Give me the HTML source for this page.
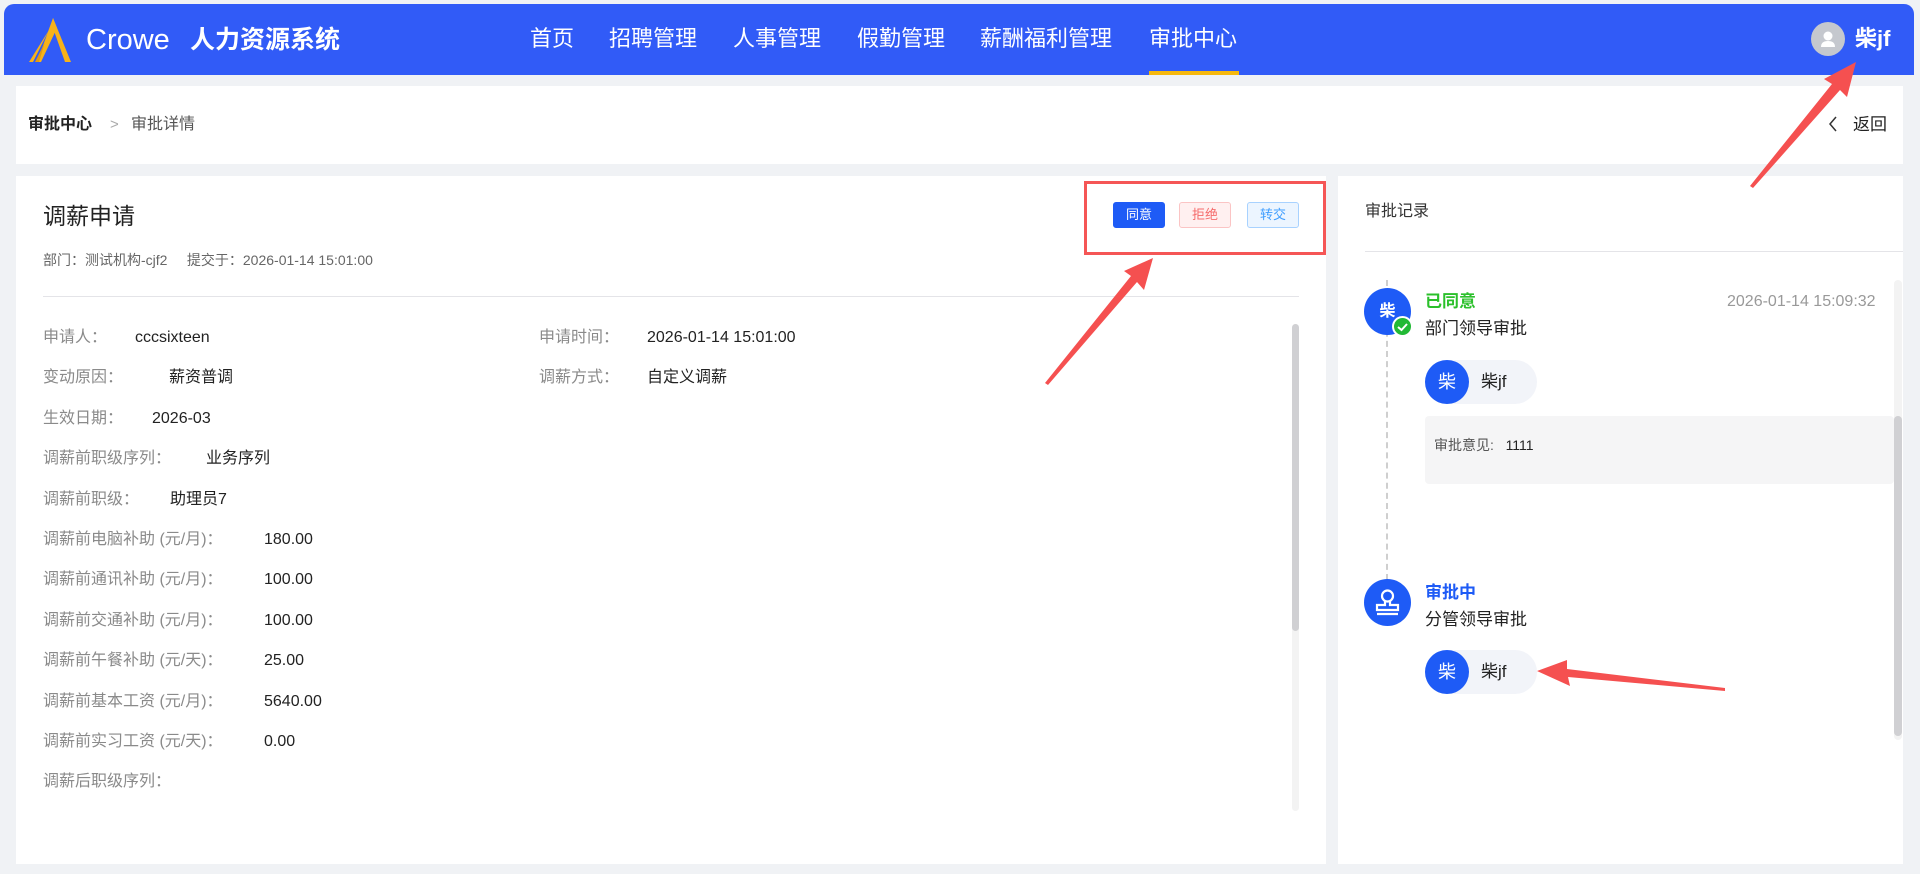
<!DOCTYPE html>
<html><head><meta charset="utf-8"><style>
*{margin:0;padding:0;box-sizing:border-box}
body{width:1920px;height:874px;overflow:hidden;background:#f0f2f5;font-family:"Liberation Sans","Noto Sans CJK SC",sans-serif;position:relative;color:#333}
.abs{position:absolute;white-space:nowrap}
#hdr{position:absolute;left:4px;top:4px;width:1910px;height:71px;background:#315bf7;border-radius:10px 10px 0 0}
.nav{position:absolute;top:24px;color:#fff;font-size:22px;line-height:30px}
.card{position:absolute;background:#fff}
.lbl{position:absolute;left:43px;font-size:16px;color:#8a8a8a;line-height:20px;white-space:nowrap}
.val{position:absolute;font-size:16px;color:#222;line-height:20px;white-space:nowrap}
.btn{position:absolute;top:202px;height:26px;width:52px;font-size:13px;line-height:24px;text-align:center;border-radius:3px;border:1px solid}
.chip{position:absolute;left:1425px;width:112px;height:44px;background:#f2f4f9;border-radius:22px}
.chip .c{position:absolute;left:0;top:0;width:44px;height:44px;border-radius:50%;background:#1e5bf6;color:#fff;font-size:18px;line-height:44px;text-align:center}
.chip .t{position:absolute;left:56px;top:11px;font-size:17px;line-height:22px;color:#222}
</style></head><body>
<div id="hdr"></div>
<svg class="abs" style="left:27px;top:16px" width="48" height="48" viewBox="0 0 48 48">
<path d="M26 2 L44 46 L38 46 L26 12 Z" fill="#f7b21a"/>
<path d="M26 2 L30 12 L14 46 L10 46 Z" fill="#f7b21a"/>
<path d="M22 14 L6 46 L2 46 Z" fill="#f7b21a"/>
<path d="M18 26 L12 46 L8 46 Z" fill="#e39b10"/>
</svg>
<div class="abs" style="left:86px;top:22px;color:#fff;font-size:29px;line-height:36px">Crowe</div>
<div class="abs" style="left:190px;top:23px;color:#fff;font-size:25px;font-weight:bold;line-height:34px">人力资源系统</div>
<div class="nav" style="left:530px">首页</div>
<div class="nav" style="left:609px">招聘管理</div>
<div class="nav" style="left:733px">人事管理</div>
<div class="nav" style="left:857px">假勤管理</div>
<div class="nav" style="left:980px">薪酬福利管理</div>
<div class="nav" style="left:1149px">审批中心</div>
<div class="abs" style="left:1149px;top:71px;width:90px;height:4px;background:#f6b80d"></div>
<div class="abs" style="left:1811px;top:22px;width:34px;height:34px;border-radius:50%;background:#c5c8ce"></div>
<svg class="abs" style="left:1811px;top:22px" width="34" height="34"><circle cx="17" cy="14" r="4.5" fill="#fff"/><path d="M10 25 Q10 19 17 19 Q24 19 24 25 Z" fill="#fff"/></svg>
<div class="abs" style="left:1855px;top:24px;color:#fff;font-size:22px;font-weight:bold;line-height:30px">柴jf</div>

<div class="card" style="left:16px;top:86px;width:1887px;height:78px"></div>
<div class="abs" style="left:28px;top:115px;font-size:16px;font-weight:bold;color:#222;line-height:20px">审批中心</div>
<div class="abs" style="left:110px;top:115px;font-size:15px;color:#aaa;line-height:20px">&gt;</div>
<div class="abs" style="left:131px;top:115px;font-size:16px;color:#555;line-height:20px">审批详情</div>
<svg class="abs" style="left:1827px;top:116px" width="12" height="16"><path d="M9 1 L3 8 L9 15" stroke="#333" stroke-width="1.5" fill="none"/></svg>
<div class="abs" style="left:1853px;top:115px;font-size:17px;color:#222;line-height:20px">返回</div>

<div class="card" style="left:16px;top:176px;width:1310px;height:688px"></div>
<div class="card" style="left:1338px;top:176px;width:565px;height:688px"></div>

<div class="abs" style="left:43px;top:202px;font-size:23px;color:#222;line-height:28px">调薪申请</div>
<div class="abs" style="left:43px;top:251px;font-size:14px;color:#666;line-height:18px">部门：测试机构-cjf2&nbsp;&nbsp;&nbsp;&nbsp;&nbsp;提交于：2026-01-14 15:01:00</div>
<div class="abs" style="left:43px;top:296px;width:1256px;height:1px;background:#e4e4e8"></div>
<div class="abs" style="left:1084px;top:181px;width:242px;height:74px;border:3px solid #f55656"></div>
<div class="btn" style="left:1113px;background:#1e5bf6;border-color:#1e5bf6;color:#fff">同意</div>
<div class="btn" style="left:1179px;background:#fff0f0;border-color:#fbc4c4;color:#f56c6c">拒绝</div>
<div class="btn" style="left:1247px;background:#ecf5ff;border-color:#a8d2ff;color:#409eff">转交</div>

<div class="lbl" style="top:328px">申请人：</div><div class="val" style="left:135px;top:328px">cccsixteen</div>
<div class="lbl" style="left:539px;top:328px">申请时间：</div><div class="val" style="left:647px;top:328px">2026-01-14 15:01:00</div>
<div class="lbl" style="top:368px">变动原因：</div><div class="val" style="left:169px;top:368px">薪资普调</div>
<div class="lbl" style="left:539px;top:368px">调薪方式：</div><div class="val" style="left:647px;top:368px">自定义调薪</div>
<div class="lbl" style="top:409px">生效日期：</div><div class="val" style="left:152px;top:409px">2026-03</div>
<div class="lbl" style="top:449px">调薪前职级序列：</div><div class="val" style="left:206px;top:449px">业务序列</div>
<div class="lbl" style="top:490px">调薪前职级：</div><div class="val" style="left:170px;top:490px">助理员7</div>
<div class="lbl" style="top:530px">调薪前电脑补助 (元/月)：</div><div class="val" style="left:264px;top:530px">180.00</div>
<div class="lbl" style="top:570px">调薪前通讯补助 (元/月)：</div><div class="val" style="left:264px;top:570px">100.00</div>
<div class="lbl" style="top:611px">调薪前交通补助 (元/月)：</div><div class="val" style="left:264px;top:611px">100.00</div>
<div class="lbl" style="top:651px">调薪前午餐补助 (元/天)：</div><div class="val" style="left:264px;top:651px">25.00</div>
<div class="lbl" style="top:692px">调薪前基本工资 (元/月)：</div><div class="val" style="left:264px;top:692px">5640.00</div>
<div class="lbl" style="top:732px">调薪前实习工资 (元/天)：</div><div class="val" style="left:264px;top:732px">0.00</div>
<div class="lbl" style="top:772px">调薪后职级序列：</div>
<div class="abs" style="left:1292px;top:324px;width:7px;height:487px;background:#f3f3f3;border-radius:4px"></div>
<div class="abs" style="left:1292px;top:324px;width:7px;height:307px;background:#d0d0d3;border-radius:4px"></div>

<div class="abs" style="left:1365px;top:202px;font-size:16px;color:#333;line-height:20px">审批记录</div>
<div class="abs" style="left:1365px;top:251px;width:538px;height:1px;background:#e4e4e8"></div>
<div class="abs" style="left:1894px;top:280px;width:8px;height:460px;background:#f3f3f3;border-radius:4px"></div>
<div class="abs" style="left:1894px;top:416px;width:8px;height:320px;background:#d0d0d3;border-radius:4px"></div>
<div class="abs" style="left:1386px;top:280px;width:0;height:300px;border-left:2px dashed #cfcfcf"></div>
<div class="abs" style="left:1364px;top:288px;width:47px;height:47px;border-radius:50%;background:#1e5bf6;color:#fff;font-size:16px;font-weight:bold;line-height:47px;text-align:center">柴</div>
<div class="abs" style="left:1392px;top:316px;width:21px;height:21px;border-radius:50%;background:#22b935;border:2px solid #fff"></div>
<svg class="abs" style="left:1392px;top:316px" width="21" height="21"><path d="M6 11 L9.5 14 L15 8" stroke="#fff" stroke-width="2" fill="none"/></svg>
<div class="abs" style="left:1425px;top:291px;font-size:17px;font-weight:bold;color:#2bc02b;line-height:22px">已同意</div>
<div class="abs" style="left:1727px;top:291px;font-size:16px;color:#999;line-height:22px">2026-01-14 15:09:32</div>
<div class="abs" style="left:1425px;top:318px;font-size:17px;color:#222;line-height:22px">部门领导审批</div>
<div class="chip" style="top:360px"><div class="c">柴</div><div class="t">柴jf</div></div>
<div class="abs" style="left:1425px;top:416px;width:469px;height:68px;background:#f5f5f6;border-radius:4px"></div>
<div class="abs" style="left:1434px;top:436px;font-size:14px;color:#555;line-height:18px">审批意见:&nbsp;&nbsp;&nbsp;<span style="color:#222">1111</span></div>
<div class="abs" style="left:1364px;top:579px;width:47px;height:47px;border-radius:50%;background:#1e5bf6"></div>
<svg class="abs" style="left:1364px;top:579px" width="47" height="47"><circle cx="23.5" cy="17" r="5.5" stroke="#fff" stroke-width="2.2" fill="none"/><path d="M21 22 L21 26 L13 26 L13 31 L34 31 L34 26 L26 26 L26 22" stroke="#fff" stroke-width="2.2" fill="none"/><path d="M13 35 L34 35" stroke="#fff" stroke-width="2.2"/></svg>
<div class="abs" style="left:1425px;top:582px;font-size:17px;font-weight:bold;color:#1e5bf6;line-height:22px">审批中</div>
<div class="abs" style="left:1425px;top:609px;font-size:17px;color:#222;line-height:22px">分管领导审批</div>
<div class="chip" style="top:650px"><div class="c">柴</div><div class="t">柴jf</div></div>

<svg class="abs" style="left:0;top:0" width="1920" height="874">
<g fill="#f55050">
<path d="M1045 383 L1131 276 L1124 271 L1153 258 L1144 290 L1137 282 L1048 385 Z"/>
<path d="M1750 186 L1832 84 L1824 79 L1856 62 L1847 97 L1840 90 L1753 188 Z"/>
<path d="M1725 691 L1568 677 L1570 686 L1537 671 L1567 660 L1567 669 L1725 688 Z"/>
</g>
</svg>
</body></html>
